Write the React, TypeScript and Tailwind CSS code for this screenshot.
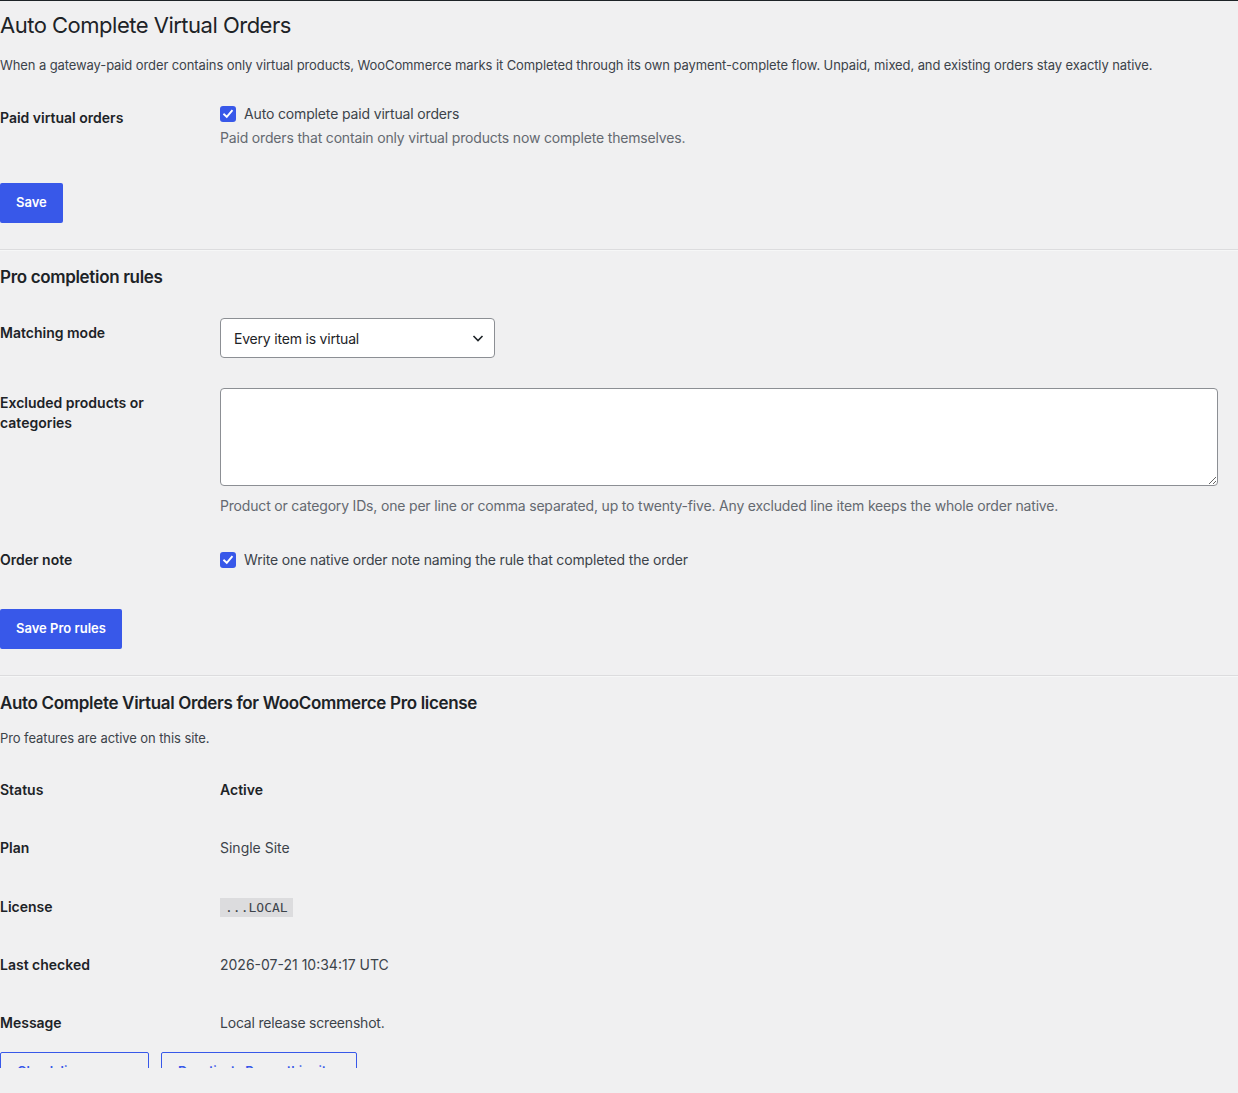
import React from "react";

function Check() {
  return (
    <span className="inline-flex h-4 w-4 shrink-0 items-center justify-center rounded-[3px] bg-[#3858e9]">
      <svg viewBox="0 0 16 16" className="h-3.5 w-3.5" fill="none">
        <path d="M3.6 8.4 L6.6 11.2 L12.4 4.4" stroke="white" strokeWidth="2.2" strokeLinecap="square" />
      </svg>
    </span>
  );
}

function Label({ children, className = "" }: { children: React.ReactNode; className?: string }) {
  return (
    <div className={"w-[220px] shrink-0 pr-[10px] text-[14px] font-semibold leading-[20px] text-[#1d2327] " + className}>
      {children}
    </div>
  );
}

function InfoRow({ label, children }: { label: string; children: React.ReactNode }) {
  return (
    <div className="flex h-[58px] items-center">
      <Label>{label}</Label>
      <div className="text-[14px] leading-[20px] text-[#3c434a]">{children}</div>
    </div>
  );
}

export default function App() {
  return (
    <div className="min-h-[1093px] bg-[#f0f0f1] text-[#1d2327]" style={{ fontFamily: "Inter, 'Noto Sans', sans-serif" }}>
      <div className="h-[1068px] overflow-hidden border-t border-[#1d2327]">
        <h1 className="mt-[10px] text-[22px] font-normal leading-[29px] tracking-[-0.5px] text-[#1d2327]">Auto Complete Virtual Orders</h1>
        <p className="mt-[15px] text-[13px] leading-[20px] tracking-[-0.1px] text-[#3c434a]">
          When a gateway-paid order contains only virtual products, WooCommerce marks it Completed through its own payment-complete flow. Unpaid, mixed, and existing orders stay exactly native.
        </p>

        <div className="mt-[13px] flex items-start">
          <Label className="pt-[20px]">Paid virtual orders</Label>
          <div className="pt-[16px]">
            <div className="flex items-center gap-2 text-[14px] leading-[20px] tracking-[-0.15px] text-[#3c434a]">
              <Check />
              <span>Auto complete paid virtual orders</span>
            </div>
            <p className="mt-[4px] text-[14px] leading-[20px] tracking-[-0.17px] text-[#646970]">
              Paid orders that contain only virtual products now complete themselves.
            </p>
          </div>
        </div>

        <button className="mt-[35px] h-[40px] rounded-[2px] bg-[#3858e9] px-[16px] text-[13px] font-semibold text-white">
          Save
        </button>

        <div className="mt-[26px] border-t border-[#dcdcde] border-b border-b-[#f6f7f7]" />

        <h2 className="mt-[15px] text-[17px] font-semibold leading-[22px] tracking-[-0.33px] text-[#1d2327]">Pro completion rules</h2>

        <div className="mt-[30px] flex items-start">
          <Label className="pt-[5px]">Matching mode</Label>
          <div className="flex h-[40px] w-[275px] items-center justify-between rounded-[4px] border border-[#8c8f94] bg-white pl-[13px] pr-[8px] text-[14px] tracking-[-0.2px] text-[#1d2327]">
            <span>Every item is virtual</span>
            <svg viewBox="0 0 16 16" className="h-4 w-4" fill="none">
              <path d="M3.5 6 L8 10.5 L12.5 6" stroke="#1d2327" strokeWidth="1.6" />
            </svg>
          </div>
        </div>

        <div className="mt-[30px] flex items-start">
          <Label className="pt-[5px]">Excluded products or categories</Label>
          <div className="flex-1 pr-[20px]">
            <textarea className="block h-[98px] w-full rounded-[4px] border border-[#8c8f94] bg-white" />
            <p className="mt-[10px] text-[14px] leading-[20px] tracking-[-0.18px] text-[#646970]">
              Product or category IDs, one per line or comma separated, up to twenty-five. Any excluded line item keeps the whole order native.
            </p>
          </div>
        </div>

        <div className="mt-[34px] flex items-center">
          <Label>Order note</Label>
          <div className="flex items-center gap-2 text-[14px] leading-[20px] tracking-[-0.15px] text-[#3c434a]">
            <Check />
            <span>Write one native order note naming the rule that completed the order</span>
          </div>
        </div>

        <button className="mt-[39px] h-[40px] rounded-[2px] bg-[#3858e9] px-[16px] text-[13px] font-semibold text-white">
          Save Pro rules
        </button>

        <div className="mt-[26px] border-t border-[#dcdcde] border-b border-b-[#f6f7f7]" />

        <h2 className="mt-[15px] text-[17px] font-semibold leading-[22px] tracking-[-0.33px] text-[#1d2327]">
          Auto Complete Virtual Orders for WooCommerce Pro license
        </h2>
        <p className="mt-[14px] text-[13px] leading-[20px] tracking-[-0.08px] text-[#3c434a]">Pro features are active on this site.</p>

        <div className="mt-[13px]">
          <InfoRow label="Status">
            <span className="font-semibold text-[#1d2327]">Active</span>
          </InfoRow>
          <InfoRow label="Plan">Single Site</InfoRow>
          <div className="h-px" />
          <InfoRow label="License">
            <code className="bg-[#dcdcde] px-[5px] py-[2px] text-[13px] text-[#3c434a]" style={{ fontFamily: "'DejaVu Sans Mono', 'Liberation Mono', monospace" }}>
              ...LOCAL
            </code>
          </InfoRow>
          <InfoRow label="Last checked">2026-07-21 10:34:17 UTC</InfoRow>
          <InfoRow label="Message"><span className="tracking-[-0.2px]">Local release screenshot.</span></InfoRow>
        </div>

        <div className="flex gap-[12px]">
          <button className="h-[40px] w-[149px] whitespace-nowrap rounded-[2px] border border-[#3858e9] bg-transparent px-[16px] text-left text-[13px] font-semibold text-[#3858e9]">
            Check license
          </button>
          <button className="h-[40px] w-[196px] whitespace-nowrap rounded-[2px] border border-[#3858e9] bg-transparent px-[16px] text-left text-[13px] font-semibold tracking-[-0.3px] text-[#3858e9]">
            Deactivate Pro on this site
          </button>
        </div>
      </div>
    </div>
  );
}
